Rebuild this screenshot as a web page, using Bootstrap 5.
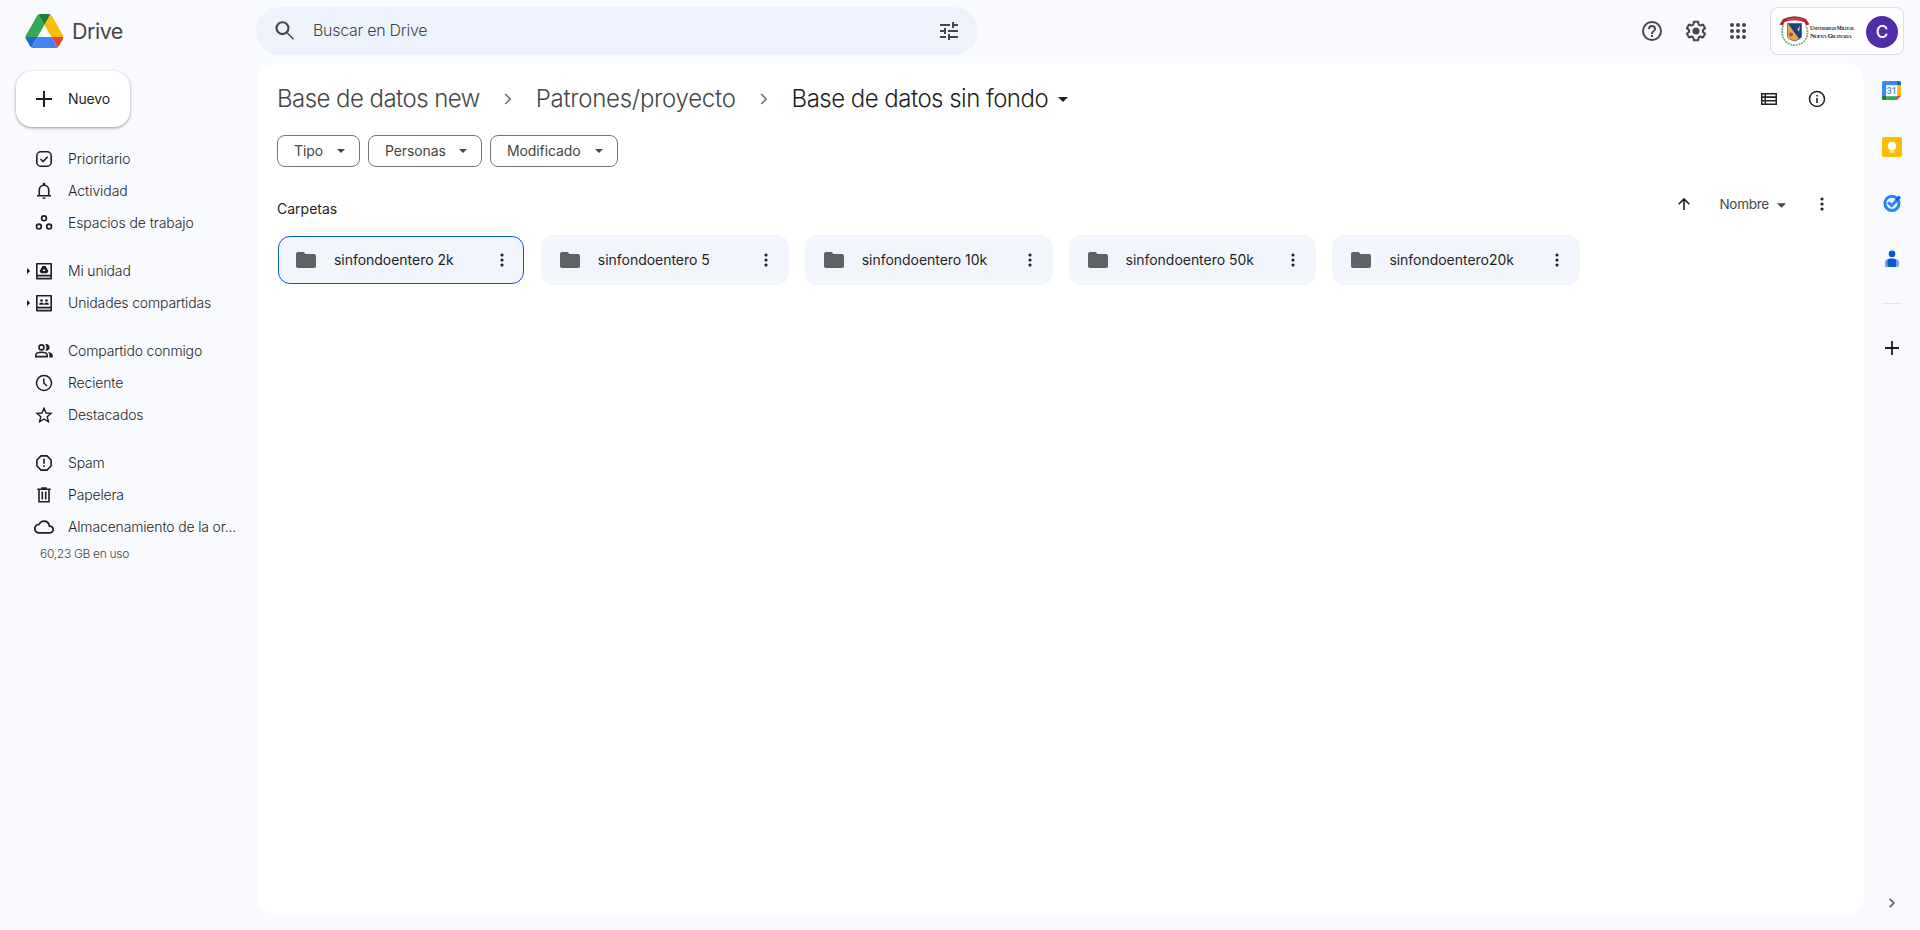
<!DOCTYPE html>
<html lang="es">
<head>
<meta charset="utf-8">
<meta name="viewport" content="width=device-width, initial-scale=1">
<title>Base de datos sin fondo - Google Drive</title>
<link href="https://cdn.jsdelivr.net/npm/bootstrap@5.3.0/dist/css/bootstrap.min.css" rel="stylesheet">
<style>
body{font-family:Inter,Roboto,sans-serif;font-size:14px;background:#f8fafd;color:#1f1f1f;font-weight:400;line-height:20px}
a{color:inherit;text-decoration:none}
svg{display:block;flex:none;fill:currentColor}
.topbar{height:63px}
.brand{width:256px;padding:2px 0 0 25px;color:#444746}
.brand-name{font-size:21.5px;line-height:28px;letter-spacing:-.5px;font-weight:370;margin:4px 0 0 9px}
.search{width:722px;height:48px;margin-top:7px;border-radius:24px;background:#edf2fc;color:#444746;padding:0 17px 2px 17px}
.search-text{font-size:16px;letter-spacing:-.28px;font-weight:350;margin:0 0 0 16px}
.tools{color:#444746;padding-right:16px}
.account{width:134px;height:48px;margin-top:7px;border:1px solid #dadce6;border-radius:8px;background:#fff;padding:0 5px 0 8px}
.avatar{width:32px;height:32px;background:#512da8;color:#fff;font-size:17px;font-weight:500;margin-top:2px}
.uni{font-family:"Liberation Serif",serif;color:#222;line-height:7px;width:43px;margin-top:1px}
.uni-top{font-size:5.2px;letter-spacing:-.3px;font-variant:small-caps;font-weight:700}
.uni-bottom{font-size:6.6px;letter-spacing:-.42px;font-variant:small-caps;font-weight:700}
.sidebar{width:257px}
.new-btn{width:114px;height:56px;margin:8px 0 0 16px;border-radius:16px;background:#fff;border:0;padding:0 0 0 16px;gap:12px;font-size:14px;font-weight:430;letter-spacing:-.15px;color:#1f1f1f;box-shadow:0 1px 2px rgba(60,64,67,.35),0 1px 3px 1px rgba(60,64,67,.15)}
.side-nav{padding-top:16px}
.side-nav .group{margin-bottom:16px}
.side-link{height:32px;padding:0 20px 0 24px;letter-spacing:-.16px;font-weight:350;font-size:14px;color:#1f1f1f}
.side-link .twist{width:10px;display:flex}
.side-link .txt{margin-left:14px;white-space:nowrap}
.storage{font-size:12px;line-height:16px;letter-spacing:-.3px;font-weight:350;color:#444746;padding:3px 0 0 40px}
.panel{width:1607px;height:852px;border-radius:20px;background:#fff;padding:0 20px}
.crumbs{height:72px;font-size:24px;line-height:32px;letter-spacing:-.55px;font-weight:350;color:#444746}
.crumbs .sep{width:56px;display:flex;justify-content:center;color:#70757a}
.chip{height:32px;border:1px solid #747775;border-radius:8px;padding:0 10px 0 16px;color:#444746;background:#fff;font-size:14px;letter-spacing:-.1px}
.sort{height:37px;color:#1f1f1f}
.folder{width:247.85px;height:50px;border-radius:12px;background:#f2f6fc;padding:0 8px 0 19px}
.folder.sel{border:1px solid #0b57d0;width:245.85px;height:48px;margin:1px;padding:0 6px 0 17px}
.folder-name{margin-left:18px;letter-spacing:-.03px}
.rail{width:56px;padding-top:18px}
.rail hr{width:20px;margin:34px 0 0;border-color:#c9cbd0;opacity:.45}
</style>
</head>
<body class="overflow-hidden">
<svg width="0" height="0" class="position-absolute" aria-hidden="true">
<symbol id="dots" viewBox="0 0 4 14"><circle cx="2" cy="2" r="1.55"/><circle cx="2" cy="7" r="1.55"/><circle cx="2" cy="12" r="1.55"/></symbol>
<symbol id="folder" viewBox="0 0 20 16"><path d="M2 0h5.6l2 2H18a2 2 0 0 1 2 2v10a2 2 0 0 1-2 2H2a2 2 0 0 1-2-2V2a2 2 0 0 1 2-2z"/></symbol>
<symbol id="caret" viewBox="0 0 10 5"><path d="M0 0h10L5 5z"/></symbol>
<symbol id="chev" viewBox="0 0 8 12"><path d="M1.2 1l5 5-5 5" fill="none" stroke="currentColor" stroke-width="1.7"/></symbol>
</svg>

<header class="topbar d-flex">
  <a href="#" class="brand d-flex align-items-center pb-2">
    <svg width="38" height="34" viewBox="-1 0 87.3 78" class="mt-1">
      <path d="M6.6 66.85l3.85 6.65c.8 1.4 1.95 2.5 3.3 3.3L27.5 53H0c0 1.55.4 3.1 1.2 4.5z" fill="#1967d2"/>
      <path d="M43.65 25L29.9 1.2c-1.35.8-2.5 1.9-3.3 3.3L1.2 48.5A9 9 0 0 0 0 53h27.5z" fill="#34a853"/>
      <path d="M73.55 76.8c1.35-.8 2.5-1.9 3.3-3.3l9.25-16c.8-1.4 1.2-2.95 1.2-4.5H59.8z" fill="#ea4335"/>
      <path d="M43.65 25L57.4 1.2C56.05.4 54.5 0 52.9 0H34.4c-1.6 0-3.15.45-4.5 1.2z" fill="#188038"/>
      <path d="M59.8 53H27.5L13.75 76.8c1.35.8 2.9 1.2 4.5 1.2h50.8c1.6 0 3.15-.45 4.5-1.2z" fill="#4285f4"/>
      <path d="M73.4 26.5L60.7 4.5c-.8-1.4-1.95-2.5-3.3-3.3L43.65 25 59.8 53h27.45c0-1.55-.4-3.1-1.2-4.5z" fill="#fbbc04"/>
    </svg>
    <span class="brand-name">Drive</span>
  </a>
  <div class="search d-flex align-items-center">
    <svg width="24" height="24" viewBox="0 0 24 24"><path d="M20.49 19l-5.73-5.73A7.04 7.04 0 0 0 16.2 9.1a6.6 6.6 0 1 0-6.6 6.6c1.57 0 3-.55 4.13-1.44L19.49 20zM5 9.1a4.6 4.6 0 1 1 9.2 0 4.6 4.6 0 0 1-9.2 0z" transform="translate(-.7 .5) scale(1.06)"/></svg>
    <span class="search-text">Buscar en Drive</span>
    <svg class="ms-auto" style="margin-top:2px" width="24" height="24" viewBox="0 0 24 24"><path d="M3 17v2h6v-2H3zM3 5v2h10V5H3zm10 16v-2h8v-2h-8v-2h-2v6h2zM7 9v2H3v2h4v2h2V9H7zm14 4v-2H11v2h10zm-6-4h2V7h4V5h-4V3h-2v6z"/></svg>
  </div>
  <div class="tools d-flex align-items-center ms-auto" style="padding-bottom:2px">
    <svg width="24" height="24" viewBox="0 0 24 24"><path d="M11 18h2v-2h-2v2zm1-16a10 10 0 1 0 0 20 10 10 0 0 0 0-20zm0 18a8 8 0 1 1 0-16 8 8 0 0 1 0 16zm0-14a4 4 0 0 0-4 4h2a2 2 0 1 1 4 0c0 2-3 1.75-3 5h2c0-2.25 3-2.5 3-5a4 4 0 0 0-4-4z"/></svg>
    <svg style="margin-left:18px" width="28" height="24" viewBox="-2 0 28 24"><path d="M13.85 22.25h-3.7c-.74 0-1.36-.54-1.45-1.27l-.27-1.89c-.27-.14-.53-.29-.79-.46l-1.8.72c-.7.26-1.47-.03-1.81-.65L2.2 15.53c-.35-.66-.2-1.44.36-1.88l1.53-1.19c-.01-.15-.02-.3-.02-.46 0-.15.01-.31.02-.46l-1.52-1.19c-.59-.45-.74-1.26-.37-1.88l1.85-3.19c.34-.62 1.11-.9 1.79-.63l1.81.73c.26-.17.52-.32.78-.46l.27-1.91c.09-.7.71-1.25 1.44-1.25h3.7c.74 0 1.36.54 1.45 1.27l.27 1.89c.27.14.53.29.79.46l1.8-.72c.71-.26 1.48.03 1.82.65l1.84 3.18c.36.66.2 1.44-.36 1.88l-1.52 1.19c.01.15.02.3.02.46s-.01.31-.02.46l1.52 1.19c.56.45.72 1.23.37 1.86l-1.86 3.22c-.34.62-1.11.9-1.8.63l-1.8-.72c-.26.17-.52.32-.78.46l-.27 1.91c-.1.68-.72 1.22-1.46 1.22zm-3.23-2h2.76l.37-2.55.53-.22c.44-.18.88-.44 1.34-.78l.45-.34 2.38.96 1.38-2.4-2.03-1.58.07-.56c.03-.26.06-.51.06-.78s-.03-.53-.06-.78l-.07-.56 2.03-1.58-1.39-2.4-2.39.96-.45-.35c-.42-.32-.87-.58-1.33-.77l-.52-.22-.37-2.55h-2.76l-.37 2.55-.53.21c-.44.19-.88.44-1.34.79l-.45.33-2.38-.95-1.39 2.39 2.03 1.58-.07.56a7 7 0 0 0-.06.79c0 .26.02.53.06.78l.07.56-2.03 1.58 1.38 2.4 2.39-.96.45.35c.43.33.86.58 1.33.77l.53.22.38 2.55z"/><circle cx="12" cy="12" r="3.5"/></svg>
    <svg class="ms-3" width="24" height="24" viewBox="0 0 24 24"><path d="M6 8a2 2 0 1 0 0-4 2 2 0 0 0 0 4zm6 0a2 2 0 1 0 0-4 2 2 0 0 0 0 4zm6 0a2 2 0 1 0 0-4 2 2 0 0 0 0 4zM6 14a2 2 0 1 0 0-4 2 2 0 0 0 0 4zm6 0a2 2 0 1 0 0-4 2 2 0 0 0 0 4zm6 0a2 2 0 1 0 0-4 2 2 0 0 0 0 4zM6 20a2 2 0 1 0 0-4 2 2 0 0 0 0 4zm6 0a2 2 0 1 0 0-4 2 2 0 0 0 0 4zm6 0a2 2 0 1 0 0-4 2 2 0 0 0 0 4z"/></svg>
    <div class="account d-flex align-items-center align-self-start" style="margin-left:20px">
      <svg width="31" height="30" viewBox="0 0 31 30">
        <path d="M4 9.5Q1 21 8 26.5T24 26.5Q31 20 27 9.500" fill="none" stroke="#7fa98a" stroke-width="1.8" stroke-dasharray="2 .8"/>
        <path d="M8.500 7.500h14v13.500q-1 2.500-7 4-6-1.500-7-4z" fill="#e7a94a" stroke="#536079" stroke-width=".8"/>
        <path d="M9 7.800h13.200v12.500q-.3 1.500-2 2.700z" fill="#243e78"/>
        <path d="M15 9.500l3.500 4.500L21 9.500l-1 6z" fill="#dfe6f2"/>
        <circle cx="12" cy="18.500" r="2" fill="#c2474a"/>
        <path d="M.5 8.500L4 3Q15.500-2.500 27 3l3.500 5.500-3.500.8-1.500-3.300Q15.500 2.500 5.500 6L4 9.600z" fill="#b32035"/>
        <path d="M8 3.800q7.500-2.300 15 0" fill="none" stroke="#e6a0a8" stroke-width=".9" stroke-dasharray="1 .6"/>
      </svg>
      <div class="uni text-nowrap"><div class="uni-top">Universidad Militar</div><div class="uni-bottom">Nueva Granada</div></div>
      <div class="avatar rounded-circle d-flex align-items-center justify-content-center ms-auto">C</div>
    </div>
  </div>
</header>

<div class="d-flex">
  <aside class="sidebar">
    <button class="new-btn d-flex align-items-center"><svg width="24" height="24" viewBox="0 0 24 24"><path d="M11 4h2v7h7v2h-7v7h-2v-7H4v-2h7z"/></svg>Nuevo</button>
    <nav class="side-nav">
      <div class="group">
        <a href="#" class="side-link d-flex align-items-center"><span class="twist"></span><svg width="20" height="20" viewBox="0 0 20 20"><rect x="2.800" y="2.800" width="14.400" height="14.400" rx="4" fill="none" stroke="currentColor" stroke-width="1.600"/><path d="M6.500 10l2.500 2.500 4.700-4.700" fill="none" stroke="currentColor" stroke-width="1.600"/></svg><span class="txt" style="letter-spacing:0">Prioritario</span></a>
        <a href="#" class="side-link d-flex align-items-center"><span class="twist"></span><svg width="20" height="20" viewBox="0 0 20 20"><path d="M3 14.800h14M5.300 14.500V9a4.700 4.700 0 0 1 9.400 0v5.500" fill="none" stroke="currentColor" stroke-width="1.600"/><path d="M8.700 4.500V3a1.300 1.300 0 0 1 2.600 0v1.500zM8.300 16.400h3.400a1.700 1.700 0 0 1-3.400 0z"/></svg><span class="txt" style="letter-spacing:-.06px">Actividad</span></a>
        <a href="#" class="side-link d-flex align-items-center"><span class="twist"></span><svg width="20" height="20" viewBox="0 0 20 20"><g fill="none" stroke="currentColor" stroke-width="1.700"><circle cx="10" cy="5.200" r="2.400"/><circle cx="4.900" cy="13.600" r="2.400"/><circle cx="15.100" cy="13.600" r="2.400"/></g></svg><span class="txt" style="letter-spacing:-.1px">Espacios de trabajo</span></a>
      </div>
      <div class="group">
        <a href="#" class="side-link d-flex align-items-center"><span class="twist"><svg width="8" height="6" viewBox="0 0 8 6"><path d="M3 0l3.200 3L3 6z"/></svg></span><svg width="20" height="20" viewBox="0 0 20 20"><path d="M2.800 2.800h14.400v14.800H2.800z" fill="none" stroke="currentColor" stroke-width="1.600" stroke-linejoin="round"/><path d="M2.800 13.800h14.400v1.600H2.800zM8.500 5h3l2.900 5-1.300 2.200H6.900L5.600 10zM10 7.700l-1.400 2.400h2.800z" fill-rule="evenodd"/></svg><span class="txt">Mi unidad</span></a>
        <a href="#" class="side-link d-flex align-items-center"><span class="twist"><svg width="8" height="6" viewBox="0 0 8 6"><path d="M3 0l3.200 3L3 6z"/></svg></span><svg width="20" height="20" viewBox="0 0 20 20"><path d="M2.800 2.800h14.400v14.800H2.800z" fill="none" stroke="currentColor" stroke-width="1.600" stroke-linejoin="round"/><path d="M2.800 13.800h14.400v1.600H2.800zM5.200 11.800v-.9q0-1.500 2.300-1.500t2.300 1.500v.9zm5 0v-.9q0-1.500 2.300-1.500t2.300 1.500v.9z"/><circle cx="7.500" cy="7.500" r="1.300"/><circle cx="12.500" cy="7.500" r="1.300"/></svg><span class="txt">Unidades compartidas</span></a>
      </div>
      <div class="group">
        <a href="#" class="side-link d-flex align-items-center"><span class="twist"></span><svg width="20" height="20" viewBox="0 0 20 20"><path d="M1.800 15.600v-1.300c0-2 3-3 5.700-3s5.700 1 5.700 3v1.300z" fill="none" stroke="currentColor" stroke-width="1.600"/><circle cx="7.500" cy="6.400" r="2.500" fill="none" stroke="currentColor" stroke-width="1.600"/><path d="M11.200 9.500a4.400 4.400 0 0 0 0-6.200 3.300 3.300 0 1 1 0 6.200zM13.800 10.800c2.400.4 5 1.600 5 3.600v2h-3.500v-2c0-1.500-.5-2.600-1.500-3.600z"/></svg><span class="txt">Compartido conmigo</span></a>
        <a href="#" class="side-link d-flex align-items-center"><span class="twist"></span><svg width="20" height="20" viewBox="0 0 20 20"><circle cx="10" cy="10" r="7.500" fill="none" stroke="currentColor" stroke-width="1.500"/><path d="M9.800 5.500V10l3.200 3" fill="none" stroke="currentColor" stroke-width="1.500"/></svg><span class="txt">Reciente</span></a>
        <a href="#" class="side-link d-flex align-items-center"><span class="twist"></span><svg width="20" height="20" viewBox="0 0 20 20"><path d="M10 3.300l2 4.700 5 .4-3.800 3.300 1.200 5-4.400-2.700-4.400 2.700 1.200-5L3 8.400 8 8z" fill="none" stroke="currentColor" stroke-width="1.400"/></svg><span class="txt">Destacados</span></a>
      </div>
      <div class="group">
        <a href="#" class="side-link d-flex align-items-center"><span class="twist"></span><svg width="20" height="20" viewBox="0 0 20 20"><path d="M7 2.900h6L17.100 7v6L13 17.100H7L2.900 13V7z" fill="none" stroke="currentColor" stroke-width="1.600" stroke-linejoin="round"/><path d="M9.200 5.800h1.600v5H9.200zM9.200 12.300h1.600v1.700H9.200z"/></svg><span class="txt">Spam</span></a>
        <a href="#" class="side-link d-flex align-items-center"><span class="twist"></span><svg width="20" height="20" viewBox="0 0 20 20"><path d="M5 4.500v12.200h10V4.500M3.300 4.300h13.400M7.300 3.100h5.400M8.300 6.500v8M11.700 6.500v8" fill="none" stroke="currentColor" stroke-width="1.600"/></svg><span class="txt">Papelera</span></a>
        <a href="#" class="side-link d-flex align-items-center"><span class="twist"></span><svg width="20" height="20" viewBox="0 0 24 24"><path d="M19.350 10.040A7.490 7.490 0 0 0 12 4C9.110 4 6.600 5.640 5.350 8.040A5.994 5.994 0 0 0 0 14c0 3.310 2.690 6 6 6h13c2.760 0 5-2.240 5-5 0-2.640-2.050-4.780-4.650-4.960zM19 18H6c-2.210 0-4-1.790-4-4 0-2.050 1.530-3.760 3.560-3.970l1.070-.110.5-.950A5.469 5.469 0 0 1 12 6c2.620 0 4.880 1.860 5.390 4.430l.3 1.500 1.530.110A2.980 2.980 0 0 1 22 15c0 1.650-1.350 3-3 3z"/></svg><span class="txt">Almacenamiento de la or...</span></a>
        <div class="storage">60,23 GB en uso</div>
      </div>
    </nav>
  </aside>

  <main class="panel">
    <div class="crumbs d-flex align-items-center">
      <a href="#">Base de datos new</a>
      <span class="sep"><svg width="8" height="12"><use href="#chev"/></svg></span>
      <a href="#" style="letter-spacing:-.27px">Patrones/proyecto</a>
      <span class="sep"><svg width="8" height="12"><use href="#chev"/></svg></span>
      <span style="color:#1f1f1f;letter-spacing:-.52px">Base de datos sin fondo</span>
      <svg style="color:#1f1f1f;margin-left:10px;margin-top:1px" width="10" height="5"><use href="#caret"/></svg>
      <div class="ms-auto d-flex align-items-center text-dark" style="padding-right:18px;gap:31px">
        <svg width="16" height="12" viewBox="0 0 16 12"><path d="M0 0h16v12H0zM1.500 1.500v1.800h2V1.500zm3.500 0v1.800h9.500V1.500zM1.500 4.900v2h2v-2zm3.500 0v2h9.500v-2zM1.500 8.600v1.900h2V8.600zm3.500 0v1.900h9.500V8.600z" fill-rule="evenodd"/></svg>
        <svg width="18" height="18" viewBox="0 0 18 18"><circle cx="9" cy="9" r="7.500" fill="none" stroke="currentColor" stroke-width="1.600"/><path d="M8.200 8.100h1.600v5H8.200zM8.200 5h1.600v1.600H8.200z"/></svg>
      </div>
    </div>
    <div class="d-flex gap-2">
      <button class="chip d-flex align-items-center justify-content-between" style="width:83px">Tipo<svg class="me-1" width="8" height="4"><use href="#caret"/></svg></button>
      <button class="chip d-flex align-items-center justify-content-between" style="width:114px">Personas<svg class="me-1" width="8" height="4"><use href="#caret"/></svg></button>
      <button class="chip d-flex align-items-center justify-content-between" style="width:128px">Modificado<svg class="me-1" width="8" height="4"><use href="#caret"/></svg></button>
    </div>
    <div class="d-flex align-items-center" style="height:68px;padding-top:6px">
      <span style="margin-top:10px">Carpetas</span>
      <div class="sort d-flex align-items-center ms-auto" style="padding-right:20px">
        <svg width="14" height="14" viewBox="0 0 14 14"><path d="M7 13V2M1.700 7.300L7 2l5.300 5.300" fill="none" stroke="currentColor" stroke-width="1.600"/></svg>
        <span style="margin-left:28px;color:#444746;letter-spacing:-.25px;font-size:13.500px">Nombre</span>
        <svg style="margin-left:8px;margin-top:3px;color:#444746" width="9" height="5"><use href="#caret"/></svg>
        <svg style="margin-left:34px" width="4" height="14"><use href="#dots"/></svg>
      </div>
    </div>
    <div class="d-flex gap-3">
      <div class="folder sel d-flex align-items-center"><svg width="20" height="16" color="#5f6368"><use href="#folder"/></svg><span class="folder-name">sinfondoentero 2k</span><svg class="ms-auto me-2" width="14" height="14"><use href="#dots"/></svg></div>
      <div class="folder d-flex align-items-center"><svg width="20" height="16" color="#5f6368"><use href="#folder"/></svg><span class="folder-name">sinfondoentero 5</span><svg class="ms-auto me-2" width="14" height="14"><use href="#dots"/></svg></div>
      <div class="folder d-flex align-items-center"><svg width="20" height="16" color="#5f6368"><use href="#folder"/></svg><span class="folder-name">sinfondoentero 10k</span><svg class="ms-auto me-2" width="14" height="14"><use href="#dots"/></svg></div>
      <div class="folder d-flex align-items-center"><svg width="20" height="16" color="#5f6368"><use href="#folder"/></svg><span class="folder-name">sinfondoentero 50k</span><svg class="ms-auto me-2" width="14" height="14"><use href="#dots"/></svg></div>
      <div class="folder d-flex align-items-center"><svg width="20" height="16" color="#5f6368"><use href="#folder"/></svg><span class="folder-name">sinfondoentero20k</span><svg class="ms-auto me-2" width="14" height="14"><use href="#dots"/></svg></div>
    </div>
  </main>

  <aside class="rail d-flex flex-column align-items-center">
    <svg width="20" height="20" viewBox="0 0 20 20"><path d="M1.500 0H15v4.500H4.500V15H0V1.500A1.500 1.500 0 0 1 1.500 0z" fill="#4285f4"/><path d="M15 0h2.500A1.500 1.500 0 0 1 19 1.500v3h-4z" fill="#1967d2"/><path d="M15 4.500h4V15h-4z" fill="#fbbc04"/><path d="M4.500 15H15v4H4.500z" fill="#34a853"/><path d="M0 15h4.500v4h-3A1.500 1.500 0 0 1 0 17.500z" fill="#188038"/><path d="M15 15h4l-4 4z" fill="#ea4335"/><path d="M4.300 4.300h10.900v10.900H4.300z" fill="#fff"/><text x="9.700" y="12.700" font-size="8.500" font-family="Roboto,sans-serif" font-weight="500" text-anchor="middle" fill="#4285f4">31</text></svg>
    <svg style="margin-top:36px" width="20" height="20" viewBox="0 0 20 20"><rect width="20" height="20" rx="1.800" fill="#fbbc04"/><path d="M10 4.800a4.300 4.300 0 0 1 2.300 7.900v.8H7.700v-.8A4.300 4.300 0 0 1 10 4.800zM7.700 14.400h4.600v1.200H7.700z" fill="#fff"/></svg>
    <svg style="margin-top:36px" width="20" height="20" viewBox="0 0 20 20"><circle cx="10" cy="10.300" r="7.100" fill="none" stroke="#2684fc" stroke-width="3"/><path d="M6.200 9.300l3.300 3.300 6-6" fill="none" stroke="#2684fc" stroke-width="3"/><path d="M13.200 6.200l3.400-3.700 2.500 2.200-3.800 3.700z" fill="#0066da"/></svg>
    <svg style="margin-top:36px" width="20" height="20" viewBox="0 0 20 20"><circle cx="10" cy="4.900" r="3.300" fill="#0b57d0"/><path d="M7 10h6a4 4 0 0 1 4 4v2a2 2 0 0 1-2 2H3v-4a4 4 0 0 1 4-4z" fill="#769dfb"/><path d="M8 9.500h3.500A2.500 2.500 0 0 1 14 12v6H8a2.500 2.500 0 0 1-2.500-2.500V12A2.500 2.500 0 0 1 8 9.500z" fill="#0b57d0"/></svg>
    <hr>
    <svg style="margin-top:37px" width="14" height="14" viewBox="0 0 14 14"><path d="M7 0v14M0 7h14" stroke="currentColor" stroke-width="1.800"/></svg>
    <svg style="margin-top:543px;color:#5f6368" width="8" height="10" viewBox="0 0 8 12"><path d="M1.200 1l5 5-5 5" fill="none" stroke="currentColor" stroke-width="2"/></svg>
  </aside>
</div>
<script src="https://cdn.jsdelivr.net/npm/bootstrap@5.3.0/dist/js/bootstrap.bundle.min.js"></script>
</body>
</html>
